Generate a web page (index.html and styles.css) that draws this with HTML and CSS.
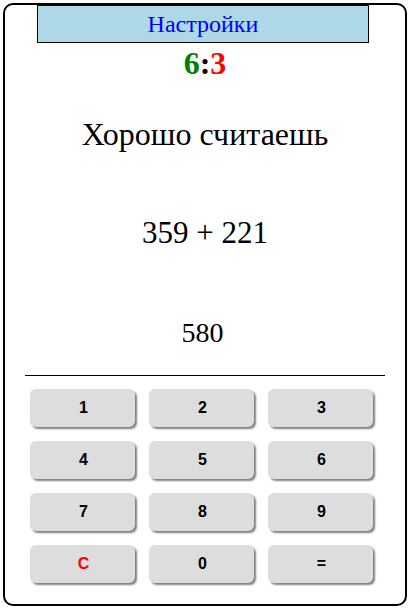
FILE: index.html
```html
<!DOCTYPE html>
<html lang="ru">
<head>
<meta charset="utf-8">
<title>Счёт</title>
<link rel="stylesheet" href="styles.css">
</head>
<body>
<div class="app">
  <div class="settings">Настройки</div>
  <div class="score"><span class="good">6</span>:<span class="bad">3</span></div>
  <div class="phrase">Хорошо считаешь</div>
  <div class="expr">359 + 221</div>
  <div class="answer">580</div>
  <div class="rule"></div>
  <div class="keypad">
    <button class="key">1</button>
    <button class="key">2</button>
    <button class="key">3</button>
    <button class="key">4</button>
    <button class="key">5</button>
    <button class="key">6</button>
    <button class="key">7</button>
    <button class="key">8</button>
    <button class="key">9</button>
    <button class="key key-clear">C</button>
    <button class="key">0</button>
    <button class="key">=</button>
  </div>
</div>
</body>
</html>
```
FILE: styles.css
```css
html, body {
  margin: 0;
  padding: 0;
  background: #fff;
}
.app {
  margin: 3px;
  width: 404px;
  height: 603px;
  box-sizing: border-box;
  border: 2px solid #000;
  border-radius: 10px;
  display: flex;
  flex-direction: column;
  font-family: "Liberation Serif", serif;
  color: #000;
}
.settings {
  margin-left: 32px;
  width: 332px;
  height: 38px;
  box-sizing: border-box;
  border: 1px solid #000;
  background: #add8e6;
  color: #0000ff;
  font-size: 24px;
  line-height: 35px;
  padding-top: 1px;
  text-align: center;
}
.score {
  margin-top: 2px;
  font-size: 32px;
  line-height: 36px;
  font-weight: bold;
  text-align: center;
}
.good { color: #008000; }
.bad { color: #ff0000; }
.phrase, .expr, .answer {
  text-align: center;
}
.phrase {
  margin-top: 35px;
  font-size: 32px;
  line-height: 36px;
}
.expr {
  margin-top: 64px;
  font-size: 31px;
  line-height: 34px;
}
.answer {
  margin-top: 67px;
  padding-right: 5px;
  font-size: 28px;
  line-height: 32px;
}
.rule {
  margin: 26px 20px 0;
  height: 1px;
  background: #000;
}
.keypad {
  margin-top: 13px;
  padding-left: 25px;
  display: grid;
  grid-template-columns: repeat(3, 105px);
  grid-auto-rows: 38px;
  gap: 14px;
}
.key {
  border: none;
  border-radius: 6px;
  background: #dddddd;
  box-shadow: 2px 2px 2px #808080;
  font-family: "Liberation Sans", Arial, sans-serif;
  font-weight: bold;
  font-size: 16px;
  color: #000;
  padding: 0 0 0 2px;
}
.key-clear { color: #ff0000; }
```
